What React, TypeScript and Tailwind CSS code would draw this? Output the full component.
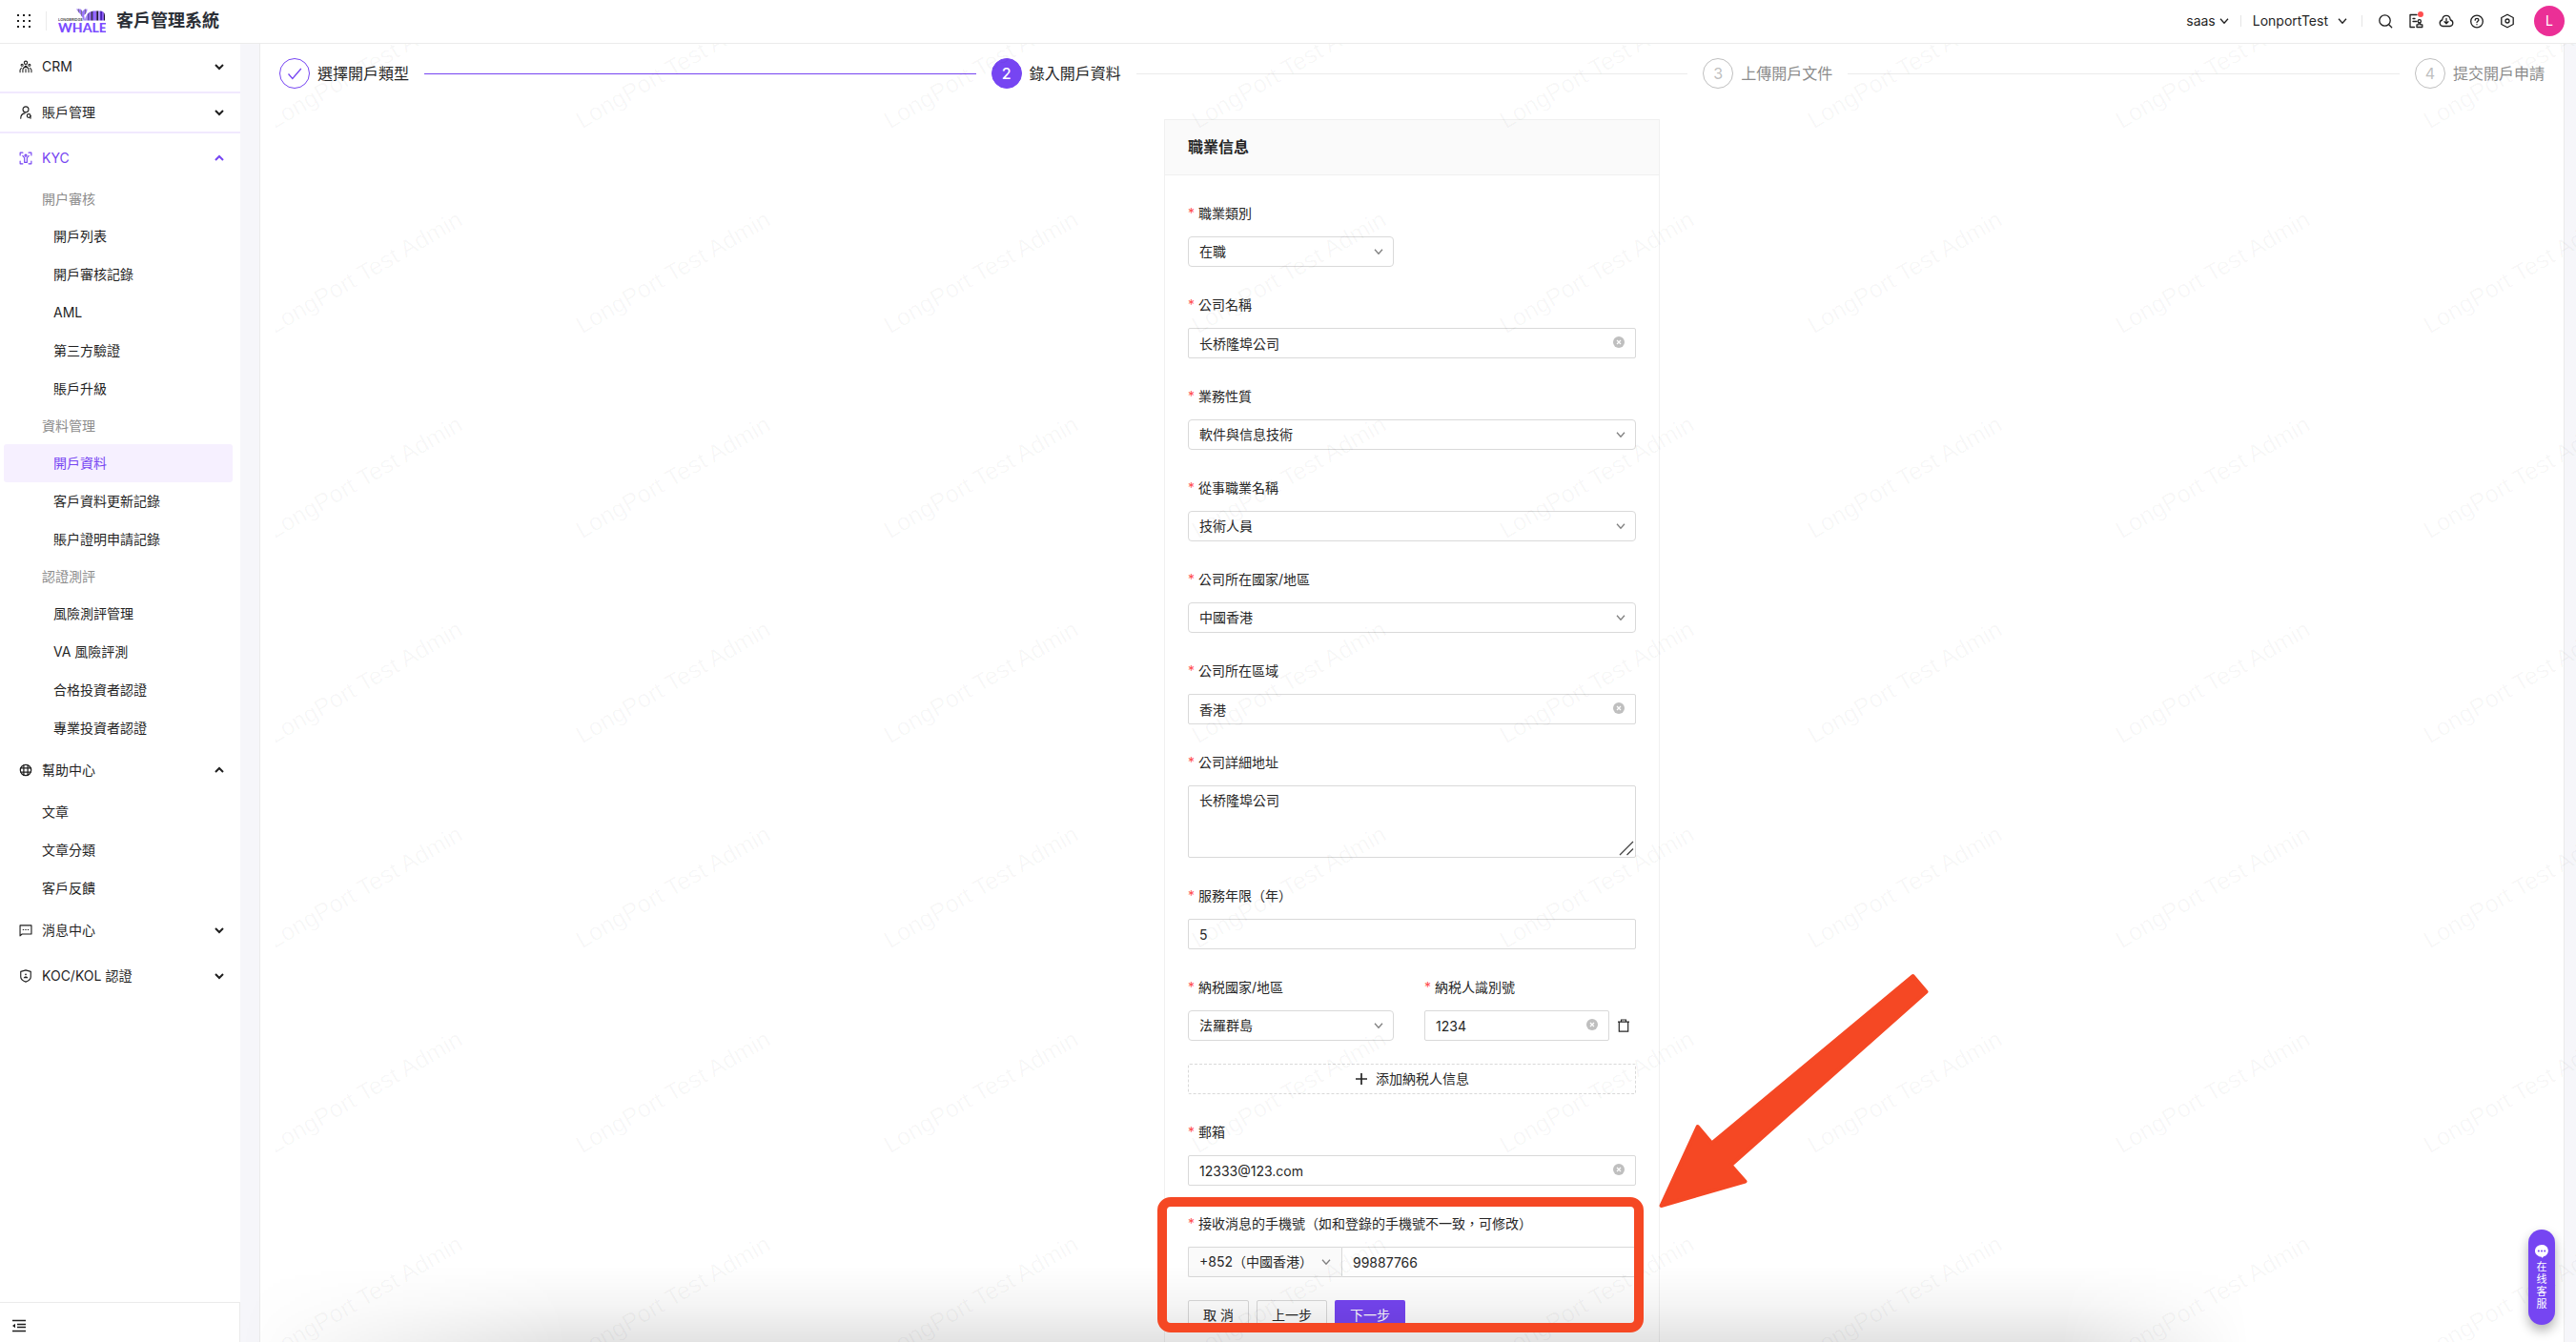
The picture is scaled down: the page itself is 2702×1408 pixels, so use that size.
import React from "react";

type IconProps = { className?: string };

const Stroke = ({ className, children, w = 1.3 }: IconProps & { children: React.ReactNode; w?: number }) => (
  <svg
    viewBox="0 0 16 16"
    className={className}
    fill="none"
    stroke="currentColor"
    strokeWidth={w}
    strokeLinecap="round"
    strokeLinejoin="round"
    aria-hidden="true"
  >
    {children}
  </svg>
);

const CrmIcon = () => (
  <Stroke className="size-[14px]" w={1.2}>
    <circle cx="8" cy="3.2" r="1.9" />
    <circle cx="3.6" cy="6" r="1.2" />
    <circle cx="12.4" cy="6" r="1.2" />
    <path d="M4.500 14.500v-2.600a3.500 3.500 0 0 1 7 0v2.600M8 11v3.500M1.200 14.500v-2.800l1.600-2.200M14.800 14.500v-2.800l-1.600-2.200M5.600 9.400L8 6.800l2.400 2.600" />
  </Stroke>
);

const UserSearchIcon = () => (
  <Stroke className="size-[14px]">
    <circle cx="8" cy="4.4" r="3.4" />
    <path d="M2 15c0-3.4 2-5.6 5-6" />
    <circle cx="11.6" cy="12" r="2.1" />
    <path d="M13.700 12v3" />
  </Stroke>
);

const KycIcon = () => (
  <Stroke className="size-[14px]">
    <path d="M1.300 4.500V1.300h3.200M11.500 1.300h3.200v3.200M14.700 11.500v3.200h-3.200M4.500 14.700H1.300v-3.200" />
    <circle cx="8" cy="4.800" r="1.200" />
    <path d="M4.300 5l2.200 2.700v5.300h3V7.700L11.700 5" />
  </Stroke>
);

const HelpCenterIcon = () => (
  <Stroke className="size-[14px]" w={1.4}>
    <circle cx="8" cy="8" r="6.5" />
    <path d="M5.600 2v12M10.400 2v12M2 5.600h12M2 10.400h12" />
  </Stroke>
);

const MessageIcon = () => (
  <Stroke className="size-[14px]">
    <path d="M1.200 14.600V2.200h13.600v10.400H3.600z" />
    <path d="M4.800 7.400h.6M7.700 7.400h.6M10.600 7.400h.6" />
  </Stroke>
);

const ShieldUserIcon = () => (
  <Stroke className="size-[14px]">
    <path d="M8 1l6 1.700v6.300c0 2.800-2.600 4.600-6 6-3.400-1.400-6-3.200-6-6V2.700z" />
    <circle cx="8" cy="6" r="1" fill="currentColor" stroke="none" />
    <path d="M5.300 10.700c.3-1.600 1.200-2.200 2.700-2.200s2.400.6 2.700 2.200z" fill="currentColor" stroke="none" />
  </Stroke>
);

const Chevron = ({ up = false }: { up?: boolean }) => (
  <svg viewBox="0 0 10 10" className="size-[10px]" fill="none" stroke="currentColor" strokeWidth="2" aria-hidden="true">
    <path d={up ? "M1 7l4-4 4 4" : "M1 3l4 4 4-4"} />
  </svg>
);

const ThinChevron = ({ className }: IconProps) => (
  <svg viewBox="0 0 10 10" className={className} fill="none" stroke="currentColor" strokeWidth="1.3" aria-hidden="true">
    <path d="M1 2.800l4 4.400 4-4.400" />
  </svg>
);

const bodyStripes = ["#8b6fd6", "#a78bfa", "#5b3fb0", "#8b5cf6", "#2a1a4a", "#7c4dff", "#8b5cf6", "#1f1235", "#a78bfa", "#4a1fb8", "#8b5cf6", "#1f1235"];

const Logo = () => (
  <svg viewBox="0 0 50 26" className="h-[26px] w-[50px] shrink-0" role="img" aria-label="Longbridge Whale">
    <defs>
      <clipPath id="whale-body">
        <path d="M28 12.500C28.500 6.500 32.500 2.500 38 2.500h6.500c3 0 4.500 2.200 4.500 5V12.500z" />
      </clipPath>
      <clipPath id="whale-tail">
        <path d="M19 .5h4.500L25.500 3l2-2.200L30.500.5c0 3.500-1.500 5-3.300 6.500L28 12.500h-1.500c-.5-4.500-4.500-7.500-7.500-12z" />
      </clipPath>
    </defs>
    <g clipPath="url(#whale-tail)">
      <rect x="19" y="0" width="12" height="13" fill="#9b78f7" />
      <path d="M21.500 0v13M24.500 0v13M28.500 0v8" stroke="#7a6f96" strokeWidth="1" />
    </g>
    <g clipPath="url(#whale-body)">
      {bodyStripes.map((c, i) => (
        <rect key={i} x={27 + i * 1.9} y="0" width="1.9" height="13" fill={c} />
      ))}
    </g>
    <text x="0" y="12.5" fontSize="4" fontWeight="600" fontFamily="Inter, sans-serif" fill="#4a4a4a">
      LONGBRIDGE
    </text>
    <text x="0" y="25" fontSize="14" fontWeight="900" fontFamily="Lato, sans-serif" fill="#7c4dff">
      WHALE
    </text>
  </svg>
);

function MenuHead({ icon, label, open, active }: { icon: React.ReactNode; label: string; open?: boolean; active?: boolean }) {
  return (
    <button
      type="button"
      aria-expanded={!!open}
      className={`flex h-10 w-full items-center pr-[17px] pl-5 text-left text-sm ${active ? "text-[#7645f2]" : "text-[#1f1f1f]"}`}
    >
      {icon}
      <span className="ml-[10px] flex-1">{label}</span>
      <Chevron up={open} />
    </button>
  );
}

function MenuGroup({ title, items, current }: { title: string; items: string[]; current?: string }) {
  return (
    <section>
      <h3 className="pl-11 text-sm leading-[38px] text-[#8c8c8c]">{title}</h3>
      <ul>
        {items.map((item) => (
          <li key={item} className="pr-2 pl-1">
            <a
              href="#"
              className={`block rounded-[3px] pl-[52px] text-sm leading-10 ${
                item === current ? "bg-[#f6f0ff] text-[#7645f2]" : "text-[#1f1f1f]"
              }`}
            >
              {item}
            </a>
          </li>
        ))}
      </ul>
    </section>
  );
}

function Sidebar() {
  return (
    <aside className="flex w-[252px] shrink-0 flex-col bg-white">
      <nav className="min-h-0 flex-1 overflow-hidden pt-1">
        <div className="border-b-2 border-[#f1e9fe] pb-[6px]">
          <MenuHead icon={<CrmIcon />} label="CRM" />
        </div>
        <div className="mb-[6px] border-b-2 border-[#f1e9fe]">
          <MenuHead icon={<UserSearchIcon />} label="賬戶管理" />
        </div>
        <MenuHead icon={<KycIcon />} label="KYC" open active />
        <div className="py-1">
          <MenuGroup title="開户審核" items={["開戶列表", "開戶審核記錄", "AML", "第三方驗證", "賬戶升級"]} />
          <MenuGroup title="資料管理" items={["開戶資料", "客戶資料更新記錄", "賬户證明申請記錄"]} current="開戶資料" />
          <MenuGroup title="認證測評" items={["風險測評管理", "VA 風險評測", "合格投資者認證", "專業投資者認證"]} />
        </div>
        <MenuHead icon={<HelpCenterIcon />} label="幫助中心" open />
        <ul className="py-1">
          {["文章", "文章分類", "客戶反饋"].map((item) => (
            <li key={item}>
              <a href="#" className="block pl-11 text-sm leading-10 text-[#1f1f1f]">
                {item}
              </a>
            </li>
          ))}
        </ul>
        <div className="flex flex-col gap-2">
          <MenuHead icon={<MessageIcon />} label="消息中心" />
          <MenuHead icon={<ShieldUserIcon />} label="KOC/KOL 認證" />
        </div>
      </nav>
      <div className="flex h-[42px] items-start border-t border-r border-[#ebebeb] pt-4 pl-3">
        <button type="button" aria-label="收起菜單" className="text-[#1f1f1f]">
          <svg viewBox="0 0 16 16" className="size-4" fill="none" stroke="currentColor" strokeWidth="1.3" aria-hidden="true">
            <path d="M1 2.500h14M6 6.500h9M6 9.500h9M1 13.500h14" />
            <path d="M1 8l3-2.200v4.400z" fill="currentColor" stroke="none" />
          </svg>
        </button>
      </div>
    </aside>
  );
}

function Header() {
  return (
    <header className="flex h-[46px] shrink-0 items-center border-b border-[#ebebeb] bg-white pb-px text-sm text-[#1f1f1f]">
      <button type="button" aria-label="應用" className="ml-[17px]">
        <svg viewBox="0 0 16 16" className="size-4" fill="currentColor" aria-hidden="true">
          {[1, 7, 13].map((y) => [1, 7, 13].map((x) => <rect key={`${x}-${y}`} x={x} y={y} width="2" height="2" />))}
        </svg>
      </button>
      <span className="mr-3 ml-[15px] h-5 w-px bg-[#ebebeb]" />
      <Logo />
      <h1 className="ml-[11px] text-lg leading-6 font-bold text-[#2b2f36]">客戶管理系統</h1>
      <div className="ml-auto flex items-center pr-3">
        <button type="button" className="flex items-center gap-1">
          saas <ThinChevron className="size-[10px]" />
        </button>
        <span className="mr-3 ml-3 h-3 w-px bg-[#e5e5e5]" />
        <button type="button" className="flex items-center gap-[10px]">
          LonportTest <ThinChevron className="size-[10px]" />
        </button>
        <span className="mr-4 ml-[15px] h-3 w-px bg-[#e5e5e5]" />
        <div className="flex items-center gap-4">
          <button type="button" aria-label="搜索">
            <Stroke className="size-4">
              <circle cx="7.5" cy="7.5" r="5.7" />
              <path d="M11.700 11.700l3 3" />
            </Stroke>
          </button>
          <button type="button" aria-label="審批" className="relative">
            <Stroke className="size-4">
              <path d="M9 1.500H2v13h4.500M5 5.500h2M5 8.500h4" />
              <circle cx="11.8" cy="8.3" r="1.6" />
              <path d="M11 10v1.800H9v2.700h5.800v-2.700h-2.200V10" />
            </Stroke>
            <span className="absolute -top-[2px] right-0 size-[6px] rounded-full bg-[#ff4d4f]" />
          </button>
          <button type="button" aria-label="下載">
            <Stroke className="size-4">
              <path d="M4.300 13.500a3.300 3.300 0 0 1-.6-6.500C4 4.200 5.700 2.300 8 2.300S12 4.200 12.300 7a3.300 3.300 0 0 1-.6 6.500zM8 5.500v5M6 8.700l2 2 2-2" />
            </Stroke>
          </button>
          <button type="button" aria-label="幫助">
            <Stroke className="size-4">
              <circle cx="8" cy="8.5" r="6.3" />
              <path d="M6.200 7.200c0-2.600 3.700-2.400 3.700-.2 0 1.300-1.900 1.300-1.900 2.600M8 11.600v.2" />
            </Stroke>
          </button>
          <button type="button" aria-label="設置">
            <Stroke className="size-4">
              <path d="M8 1.200l6.200 3.300v7L8 14.800l-6.200-3.300v-7z" />
              <circle cx="8" cy="8" r="2" />
            </Stroke>
          </button>
        </div>
        <button type="button" className="ml-5 flex size-8 items-center justify-center rounded-full bg-[#eb2f96] text-white">
          L
        </button>
      </div>
    </header>
  );
}

const steps = [
  { title: "選擇開戶類型", state: "done" },
  { title: "錄入開戶資料", state: "active" },
  { title: "上傳開戶文件", state: "wait" },
  { title: "提交開戶申請", state: "wait" },
];

const circleStyle: Record<string, string> = {
  done: "border-[#7645f2] text-[#7645f2]",
  active: "border-[#7645f2] bg-[#7645f2] text-white font-medium",
  wait: "border-[#bfbfbf] text-[#bfbfbf]",
};

function Steps() {
  return (
    <ol className="flex items-center gap-4">
      {steps.map((s, i) => (
        <React.Fragment key={s.title}>
          {i > 0 && <li aria-hidden="true" className={`h-px flex-1 ${i === 1 ? "bg-[#7645f2]" : "bg-[#ebebeb]"}`} />}
          <li className="flex items-center gap-2 text-base">
            <span className={`flex size-8 items-center justify-center rounded-full border ${circleStyle[s.state]}`}>
              {s.state === "done" ? (
                <svg viewBox="0 0 16 16" className="size-4" fill="none" stroke="currentColor" strokeWidth="1.3" aria-hidden="true">
                  <path d="M1.500 8.500l4.300 5L14.800 3" />
                </svg>
              ) : (
                i + 1
              )}
            </span>
            <span className={s.state === "wait" ? "text-[#8c8c8c]" : "text-[#262626]"}>{s.title}</span>
          </li>
        </React.Fragment>
      ))}
    </ol>
  );
}

function Field({ id, label, className = "", children }: { id: string; label: string; className?: string; children: React.ReactNode }) {
  return (
    <div className={className}>
      <label htmlFor={id} className="mb-2 flex h-8 items-center gap-1 text-sm text-[#262626]">
        <span className="w-[7px] text-center text-[#ff4d4f]">*</span>
        {label}
      </label>
      {children}
    </div>
  );
}

function Select({ id, value, className = "" }: { id: string; value: string; className?: string }) {
  return (
    <div className={`relative ${className}`}>
      <select id={id} className="h-8 w-full appearance-none rounded border border-[#d9d9d9] bg-white px-[11px] text-sm text-[#262626]">
        <option>{value}</option>
      </select>
      <ThinChevron className="pointer-events-none absolute top-[11px] right-[11px] size-[10px] text-[#7f7f7f]" />
    </div>
  );
}

function TextInput({ id, value, clear, className = "" }: { id: string; value: string; clear?: boolean; className?: string }) {
  return (
    <div className={`relative ${className}`}>
      <input id={id} defaultValue={value} className="h-8 w-full rounded-[2px] border border-[#d9d9d9] bg-white px-[11px] text-sm text-[#262626]" />
      {clear && (
        <button type="button" aria-label="清除" className="absolute top-[9px] right-3 text-[#bfbfbf]">
          <svg viewBox="0 0 12 12" className="size-3" aria-hidden="true">
            <circle cx="6" cy="6" r="6" fill="currentColor" />
            <path d="M4 4l4 4M8 4l-4 4" stroke="#fff" strokeWidth="1.2" />
          </svg>
        </button>
      )}
    </div>
  );
}

function Callout() {
  return (
    <>
      <div className="pointer-events-none absolute -top-3 -right-2 -bottom-[2px] -left-8 z-30 rounded-[14px] border-[10px] border-[#f54824]" />
      <svg
        viewBox="0 0 284 248"
        className="pointer-events-none absolute bottom-full left-full z-30 ml-6 h-[248px] w-[284px]"
        fill="#f54824"
        stroke="#f54824"
        strokeWidth="4"
        strokeLinejoin="round"
        aria-hidden="true"
      >
        <path d="M2.500 245L40.700 162L55.500 179.500L266.500 4L280.500 20.500L75.500 202.500L90.500 219.500Z" />
      </svg>
    </>
  );
}

function FormCard() {
  return (
    <form className="mx-auto mt-8 w-full max-w-[520px] border border-[#f0f0f0]" onSubmit={(e) => e.preventDefault()}>
      <h2 className="border-b border-[#f0f0f0] bg-[#fafafa] px-6 text-base leading-[57px] font-semibold text-[#262626]">職業信息</h2>
      <div className="flex flex-col gap-6 p-6">
        <Field id="job-type" label="職業類別">
          <Select id="job-type" value="在職" className="w-[216px]" />
        </Field>
        <Field id="company" label="公司名稱">
          <TextInput id="company" value="长桥隆埠公司" clear />
        </Field>
        <Field id="business" label="業務性質">
          <Select id="business" value="軟件與信息技術" />
        </Field>
        <Field id="occupation" label="從事職業名稱">
          <Select id="occupation" value="技術人員" />
        </Field>
        <Field id="country" label="公司所在國家/地區">
          <Select id="country" value="中國香港" />
        </Field>
        <Field id="region" label="公司所在區域">
          <TextInput id="region" value="香港" clear />
        </Field>
        <Field id="address" label="公司詳細地址">
          <div className="relative">
            <textarea
              id="address"
              defaultValue="长桥隆埠公司"
              className="block h-[76px] w-full resize-none rounded-[2px] border border-[#d9d9d9] bg-white px-[11px] py-1 text-sm leading-[22px] text-[#262626]"
            />
            <svg viewBox="0 0 16 16" className="pointer-events-none absolute right-[2px] bottom-[2px] size-4 text-[#444]" stroke="currentColor" strokeWidth="1.3" aria-hidden="true">
              <path d="M1 15L15 1M8.500 15L15 8.500" />
            </svg>
          </div>
        </Field>
        <Field id="years" label="服務年限（年）">
          <TextInput id="years" value="5" />
        </Field>
        <div className="flex items-end">
          <Field id="tax-country" label="納税國家/地區" className="mr-8">
            <Select id="tax-country" value="法羅群島" className="w-[216px]" />
          </Field>
          <Field id="tax-id" label="納税人識別號" className="flex-1">
            <TextInput id="tax-id" value="1234" clear />
          </Field>
          <button type="button" aria-label="刪除" className="mr-[6px] ml-2 flex h-8 items-center text-[#262626]">
            <svg viewBox="0 0 14 14" className="size-[14px]" fill="none" stroke="currentColor" strokeWidth="1.2" aria-hidden="true">
              <path d="M1 3.200h12M4.500 3.200V1h5v2.200M2.300 3.200v10h9.400v-10" />
            </svg>
          </button>
        </div>
        <button type="button" className="flex h-8 items-center justify-center gap-2 rounded-[2px] border border-dashed border-[#d9d9d9] bg-white text-sm text-[#262626]">
          <svg viewBox="0 0 14 14" className="size-[14px]" stroke="currentColor" strokeWidth="1.7" aria-hidden="true">
            <path d="M7 1v12M1 7h12" />
          </svg>
          添加納税人信息
        </button>
        <Field id="email" label="郵箱">
          <TextInput id="email" value="12333@123.com" clear />
        </Field>
        <div className="relative flex flex-col gap-6">
          <Field id="phone" label="接收消息的手機號（如和登錄的手機號不一致，可修改）">
            <div className="flex">
              <div className="relative w-[161px]">
                <select aria-label="區號" className="h-8 w-full appearance-none rounded-l-[2px] border border-r-0 border-[#d9d9d9] bg-[#fafafa] pl-[11px] text-sm text-[#262626]">
                  <option>+852（中國香港）</option>
                </select>
                <ThinChevron className="pointer-events-none absolute top-[11px] right-[11px] size-[10px] text-[#7f7f7f]" />
              </div>
              <input id="phone" defaultValue="99887766" className="h-8 min-w-0 flex-1 rounded-r-[2px] border border-[#d9d9d9] bg-white px-[11px] text-sm text-[#262626]" />
            </div>
          </Field>
          <div className="flex gap-2 text-sm text-[#262626]">
            <button type="button" className="h-8 rounded-[2px] border border-[#d9d9d9] bg-white px-[15px]">
              取 消
            </button>
            <button type="button" className="h-8 rounded-[2px] border border-[#d9d9d9] bg-white px-[15px]">
              上一步
            </button>
            <button type="submit" className="h-8 rounded-[2px] bg-[#7645f2] px-4 text-white">
              下一步
            </button>
          </div>
          <Callout />
        </div>
      </div>
    </form>
  );
}

function Watermark() {
  return (
    <div aria-hidden="true" className="pointer-events-none absolute inset-y-0 right-0 left-[37px] z-10 overflow-hidden">
      <div className="-mt-[123px] grid auto-rows-[215px] grid-cols-[repeat(8,323px)] font-['Liberation_Sans',sans-serif] select-none">
        {Array.from({ length: 56 }, (_, i) => (
          <div key={i} className="flex items-end">
            <span className="origin-bottom-left -rotate-30 text-[25px] leading-6 whitespace-nowrap text-black/[0.035]">LongPort Test Admin</span>
          </div>
        ))}
      </div>
    </div>
  );
}

export default function App() {
  return (
    <div className="flex h-screen flex-col overflow-hidden bg-[#f6f6fa] font-[Inter,'Noto_Sans_CJK_TC',sans-serif]">
      <Header />
      <div className="flex min-h-0 flex-1">
        <Sidebar />
        <main className="relative min-w-0 flex-1 overflow-hidden pr-3 pl-5">
          <div className="h-full border-x border-[#ebebeb] bg-white px-5 pt-[15px]">
            <Steps />
            <FormCard />
          </div>
          <Watermark />
          <div className="pointer-events-none absolute inset-x-0 bottom-0 z-20 h-20 bg-linear-to-t from-black/11 via-black/4 to-transparent [mask-image:linear-gradient(to_right,transparent,black_14%,black_78%,transparent_86%)]" />
          <button
            type="button"
            className="absolute right-[22px] bottom-[18px] z-30 flex h-[100px] w-7 flex-col items-center rounded-full bg-[#7645f2] pt-4 text-[11px] leading-[13px] text-white shadow-[0_6px_12px_rgba(0,0,0,0.3)]"
          >
            <svg viewBox="0 0 14 14" className="mb-[3px] size-[14px]" aria-hidden="true">
              <path d="M7 0a7 6.300 0 0 1 2 12.300L7.500 14 7 12.700A7 6.300 0 0 1 7 0z" fill="#fff" />
              <g fill="#7645f2">
                <circle cx="3.8" cy="6.4" r="1" />
                <circle cx="7" cy="6.4" r="1" />
                <circle cx="10.2" cy="6.4" r="1" />
              </g>
            </svg>
            {["在", "线", "客", "服"].map((c) => (
              <span key={c}>{c}</span>
            ))}
          </button>
        </main>
      </div>
    </div>
  );
}
